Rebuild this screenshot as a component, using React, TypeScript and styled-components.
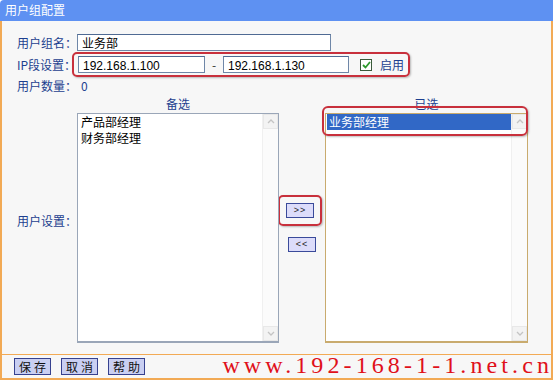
import React from 'react';
import styled, { createGlobalStyle } from 'styled-components';

const Global = createGlobalStyle`
  html, body { margin: 0; padding: 0; background: #ffffff; }
  * { box-sizing: border-box; }
`;

const Frame = styled.div`
  position: relative;
  width: 553px;
  height: 380px;
  display: flex;
  flex-direction: column;
  font-family: "Noto Sans CJK SC", "Liberation Sans", sans-serif;
  font-size: 12px;
  overflow: hidden;
`;

const TitleBar = styled.div`
  height: 21px;
  flex: none;
  background: #5e91f2;
  border-top-left-radius: 4px;
  color: #ffffff;
  padding-left: 5px;
  line-height: 20px;
  font-size: 12px;
`;

const Body = styled.div`
  flex: 1;
  display: flex;
  flex-direction: column;
  background: #f7f7f7;
  border-left: 2px solid #f2aa55;
  border-right: 2px solid #f2aa55;
  border-bottom: 2px solid #f2aa55;
`;

const Form = styled.div`
  padding: 11px 0 0 15px;
  display: flex;
  flex-direction: column;
`;

const Row = styled.div<{ $h: number }>`
  display: flex;
  align-items: center;
  height: ${p => p.$h}px;
`;

const Label = styled.span<{ $w: number }>`
  width: ${p => p.$w}px;
  flex: none;
  color: #1d3f8f;
  white-space: nowrap;
`;

const TextInput = styled.div<{ $w: number }>`
  width: ${p => p.$w}px;
  height: 17px;
  background: #ffffff;
  border: 1px solid #6f87a8;
  border-top-color: #4f6a93;
  padding-left: 4px;
  line-height: 15px;
  color: #000000;
  font-size: 12px;
  white-space: nowrap;
`;

const IpText = styled.span`
  font-family: "Liberation Sans", sans-serif;
  font-size: 12px;
`;

const Highlight = styled.div`
  display: flex;
  align-items: center;
  height: 25px;
  border: 2px solid #c8303c;
  border-radius: 5px;
  box-shadow: 1px 1px 2px rgba(0, 0, 0, 0.25);
  padding: 0 4px;
`;

const Dash = styled.span`
  width: 18px;
  text-align: center;
  color: #333;
`;

const Check = styled.span`
  width: 12px;
  height: 12px;
  margin: 0 8px 0 11px;
  border: 1px solid #3b5a3b;
  background: #ffffff;
  display: flex;
  align-items: center;
  justify-content: center;
`;

const Enable = styled.span`
  color: #1d3f8f;
`;

const Count = styled.span`
  color: #1d3f8f;
  margin-left: 2px;
`;

const Settings = styled.div`
  display: grid;
  grid-template-columns: 60px 202px 46px 203px;
  grid-template-rows: 17px 230px;
  margin-top: 3px;
`;

const ListTitle = styled.div`
  text-align: center;
  color: #1d3f8f;
  line-height: 16px;
`;

const SideLabel = styled.div`
  grid-row: 2;
  grid-column: 1;
  align-self: center;
  margin-top: -16px;
  color: #1d3f8f;
`;

const ListBox = styled.div<{ $border: string }>`
  position: relative;
  display: flex;
  background: #ffffff;
  border: 1px solid ${p => p.$border};
  border-bottom-width: 2px;
`;

const Items = styled.div`
  flex: 1;
  padding: 0 0 0 1px;
`;

const Item = styled.div<{ $sel?: boolean }>`
  height: 16px;
  line-height: 16px;
  padding-left: 2px;
  color: ${p => (p.$sel ? '#ffffff' : '#000000')};
  background: ${p => (p.$sel ? '#3168c6' : 'transparent')};
`;

const Scroll = styled.div`
  width: 16px;
  flex: none;
  display: flex;
  flex-direction: column;
  justify-content: space-between;
  background: #fbfbfb;
  border-left: 1px solid #f0f0f0;
`;

const ScrollBtn = styled.div`
  height: 15px;
  display: flex;
  align-items: center;
  justify-content: center;
  background: #f3f3f3;
  border: 1px solid #e8e8e8;
`;

const RowMark = styled.div`
  position: absolute;
  left: -4px;
  top: -8px;
  width: 206px;
  height: 30px;
  border: 2px solid #c8303c;
  border-radius: 6px;
  box-shadow: 1px 1px 2px rgba(0, 0, 0, 0.25);
  pointer-events: none;
`;

const Middle = styled.div`
  grid-row: 2;
  grid-column: 3;
  display: flex;
  flex-direction: column;
  align-items: center;
  padding-top: 82px;
  gap: 11px;
`;

const MoveMark = styled.div`
  border: 2px solid #c8303c;
  border-radius: 5px;
  box-shadow: 1px 1px 2px rgba(0, 0, 0, 0.25);
  padding: 6px;
  margin-left: -4px;
`;

const MoveBtn = styled.div`
  width: 28px;
  height: 15px;
  background: #dcdcfa;
  border: 1px solid #3a4a9a;
  font-family: "Liberation Sans", sans-serif;
  font-size: 9px;
  line-height: 13px;
  text-align: center;
  color: #222;
  letter-spacing: 1px;
`;

const Footer = styled.div`
  margin-top: auto;
  height: 24px;
  border-top: 1px solid #f2aa55;
  display: flex;
  align-items: center;
  gap: 10px;
  padding-left: 12px;
`;

const FooterBtn = styled.div`
  width: 37px;
  height: 17px;
  background: #c9cff2;
  border: 1px solid #36418f;
  color: #111;
  font-size: 12px;
  line-height: 15px;
  text-align: center;
  letter-spacing: 3px;
  padding-left: 3px;
`;

const Watermark = styled.div`
  position: absolute;
  right: 0;
  bottom: 1px;
  height: 28px;
  font-family: "Liberation Serif", serif;
  font-size: 24px;
  letter-spacing: 4.1px;
  color: #e0101a;
  line-height: 28px;
  white-space: nowrap;
`;

const Arrow = ({ up }: { up?: boolean }) => (
  <svg width="8" height="5" viewBox="0 0 8 5">
    <path d={up ? 'M1 4 L4 1 L7 4' : 'M1 1 L4 4 L7 1'} fill="none" stroke="#c4c4c4" strokeWidth="1.3" />
  </svg>
);

const ScrollBar = () => (
  <Scroll>
    <ScrollBtn><Arrow up /></ScrollBtn>
    <ScrollBtn><Arrow /></ScrollBtn>
  </Scroll>
);

export default function App() {
  return (
    <Frame>
      <Global />
      <TitleBar>用户组配置</TitleBar>
      <Body>
        <Form>
          <Row $h={20}>
            <Label $w={60}>用户组名：</Label>
            <TextInput $w={254}>业务部</TextInput>
          </Row>
          <Row $h={25}>
            <Label $w={55}>IP段设置：</Label>
            <Highlight>
              <TextInput $w={127}><IpText>192.168.1.100</IpText></TextInput>
              <Dash>-</Dash>
              <TextInput $w={126}><IpText>192.168.1.130</IpText></TextInput>
              <Check>
                <svg width="9" height="8" viewBox="0 0 9 8">
                  <path d="M1 4 L3.5 6.5 L8 1" fill="none" stroke="#2e9a2e" strokeWidth="1.8" />
                </svg>
              </Check>
              <Enable>启用</Enable>
            </Highlight>
          </Row>
          <Row $h={16}>
            <Label $w={62}>用户数量：</Label>
            <Count>0</Count>
          </Row>
          <Settings>
            <span />
            <ListTitle>备选</ListTitle>
            <span />
            <ListTitle>已选</ListTitle>
            <SideLabel>用户设置：</SideLabel>
            <ListBox $border="#9aa6b8">
              <Items>
                <Item>产品部经理</Item>
                <Item>财务部经理</Item>
              </Items>
              <ScrollBar />
            </ListBox>
            <Middle>
              <MoveMark><MoveBtn>&gt;&gt;</MoveBtn></MoveMark>
              <MoveBtn>&lt;&lt;</MoveBtn>
            </Middle>
            <ListBox $border="#c9ab6e">
              <Items>
                <Item $sel>业务部经理</Item>
              </Items>
              <ScrollBar />
              <RowMark />
            </ListBox>
          </Settings>
        </Form>
        <Footer>
          <FooterBtn>保存</FooterBtn>
          <FooterBtn>取消</FooterBtn>
          <FooterBtn>帮助</FooterBtn>
        </Footer>
      </Body>
      <Watermark>www.192-168-1-1.net.cn</Watermark>
    </Frame>
  );
}
